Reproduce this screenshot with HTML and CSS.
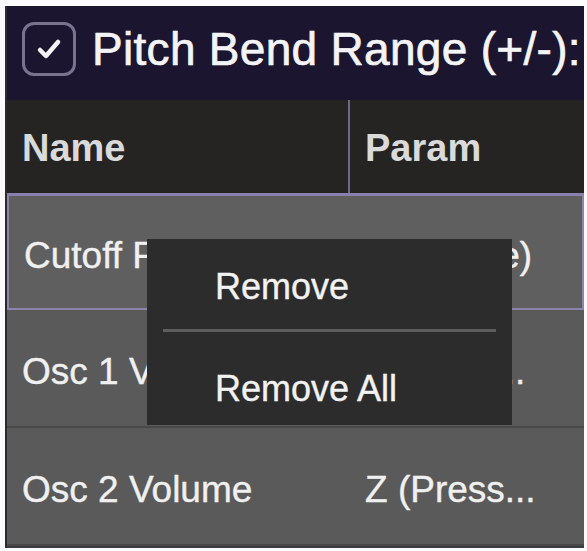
FILE: index.html
```html
<!DOCTYPE html>
<html lang="en">
<head>
  <meta charset="UTF-8">
  <title>Pitch Bend Range</title>
  <link rel="stylesheet" href="styles.css">
</head>
<body>
  <div class="panel">
    <div class="title-bar">
      <span class="checkbox">
        <svg width="32" height="32" viewBox="0 0 32 32"><path d="M7 17 L13 23 L25 9" fill="none" stroke="#f4f4f4" stroke-width="4.5" stroke-linecap="round" stroke-linejoin="round"/></svg>
      </span>
      <span class="title">Pitch Bend Range (+/-):</span>
    </div>

    <div class="table">
      <div class="thead">
        <div class="th">Name</div>
        <div class="th">Param</div>
      </div>
      <div class="row selected">
        <div class="td">Cutoff Frequency</div>
        <div class="td">Tilt (Slide)</div>
      </div>
      <div class="row">
        <div class="td">Osc 1 Volume</div>
        <div class="td">X (Slide...</div>
      </div>
      <div class="row">
        <div class="td">Osc 2 Volume</div>
        <div class="td">Z (Press...</div>
      </div>
    </div>

    <div class="menu">
      <div class="menu-item">Remove</div>
      <div class="menu-sep"></div>
      <div class="menu-item">Remove All</div>
    </div>
  </div>
</body>
</html>
```

FILE: styles.css
```css
body {
  margin: 0;
  background: #fbfbfd;
  font-family: "Liberation Sans", Arial, sans-serif;
}
.panel {
  position: relative;
  margin: 6px 3px 3px 5px;
  background: #1b1530;
  border-left: 2px solid #2c2a2e;
  border-bottom: 2px solid #3c3c3c;
  overflow: hidden;
}
.title-bar {
  height: 94px;
  box-sizing: border-box;
  padding: 0 0 8px 15px;
  display: flex;
  align-items: center;
  gap: 16px;
}
.checkbox {
  width: 48px;
  height: 48px;
  border: 3px solid #7a7390;
  border-radius: 12px;
  display: flex;
  align-items: center;
  justify-content: center;
}
.title {
  color: #f4f4f6;
  font-size: 46px;
  letter-spacing: 0.3px;
  -webkit-text-stroke: 0.7px #f4f4f6;
  white-space: nowrap;
}
.thead, .row {
  display: grid;
  grid-template-columns: 341px 1fr;
}
.thead {
  height: 93px;
  background: #262422;
  border-bottom: 3px solid #8a80ad;
}
.th {
  display: flex;
  align-items: center;
  padding: 4px 0 0 15px;
  font-size: 38px;
  font-weight: bold;
  color: #dadada;
}
.th + .th {
  border-left: 2px solid #6f6888;
}
.row {
  height: 116px;
  background: #5a5a5a;
  border-bottom: 2px solid #494949;
}
.row.selected {
  height: 112px;
  background: #5f5f5f;
  border: 2px solid #8c84aa;
  border-top: none;
}
.td {
  display: flex;
  align-items: center;
  padding: 8px 0 0 15px;
  font-size: 37px;
  color: #f0f0f0;
  -webkit-text-stroke: 0.4px #f0f0f0;
  white-space: nowrap;
  overflow: hidden;
}
.td + .td {
  padding-left: 17px;
}
.menu {
  position: absolute;
  left: 140px;
  top: 233px;
  width: 365px;
  height: 186px;
  background: #2c2c2c;
  box-sizing: border-box;
  padding: 18px 16px 0;
}
.menu-item {
  height: 60px;
  display: flex;
  align-items: center;
  padding-left: 52px;
  font-size: 36px;
  color: #f2f2f2;
  -webkit-text-stroke: 0.4px #f2f2f2;
}
.menu-sep {
  height: 3px;
  background: #5e5e5e;
  margin: 12px 0 27px;
}
```
